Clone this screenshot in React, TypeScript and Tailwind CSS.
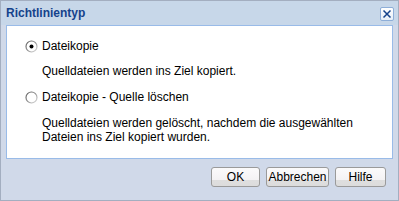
import React, { useState } from 'react';

type Option = {
  id: string;
  label: string;
  description: string[];
};

const options: Option[] = [
  {
    id: 'copy',
    label: 'Dateikopie',
    description: ['Quelldateien werden ins Ziel kopiert.'],
  },
  {
    id: 'move',
    label: 'Dateikopie - Quelle löschen',
    description: [
      'Quelldateien werden gelöscht, nachdem die ausgewählten',
      'Dateien ins Ziel kopiert wurden.',
    ],
  },
];

const Radio: React.FC<{ checked: boolean }> = ({ checked }) => (
  <svg width="13" height="13" viewBox="0 0 13 13" className="shrink-0">
    <defs>
      <linearGradient id="rim" x1="0" y1="0" x2="1" y2="1">
        <stop offset="0%" stopColor="#5a5a5a" />
        <stop offset="55%" stopColor="#9a9a9a" />
        <stop offset="100%" stopColor="#e2e2e2" />
      </linearGradient>
    </defs>
    <circle cx="6.5" cy="6.5" r="5.5" fill="#ffffff" stroke="url(#rim)" strokeWidth="1.2" />
    {checked && <circle cx="6.5" cy="6.5" r="2" fill="#000000" />}
  </svg>
);

const DialogButton: React.FC<{ label: string; width: string }> = ({ label, width }) => (
  <button
    className={`${width} h-[20px] rounded-[3px] border border-[#9a9a9a] bg-[linear-gradient(to_bottom,#fbfafb_0%,#f4f2f4_66%,#dedede_68%,#dcdcdc_100%)] text-[12px] leading-[18px] text-black`}
  >
    {label}
  </button>
);

export default function App() {
  const [selected, setSelected] = useState('copy');

  return (
    <div className="w-[399px] h-[201px] border border-[#a3aec0] bg-[#d0d9e9] flex flex-col font-['Liberation_Sans',Arial,sans-serif] text-black">
      {/* Title bar */}
      <div className="h-[24px] shrink-0 bg-[#c7d7e9] flex items-center justify-between pl-[5px] pr-[4px]">
        <span className="text-[12px] font-bold text-[#15428b] leading-none">Richtlinientyp</span>
        <button className="w-[14px] h-[14px] mt-[2px] rounded-[2px] border border-[#8eaed8] bg-[linear-gradient(to_bottom,#ffffff,#e6eef8)] flex items-center justify-center">
          <svg width="10" height="10" viewBox="0 0 10 10">
            <path d="M1.5 1.5 L8.5 8.5 M8.5 1.5 L1.5 8.5" stroke="#15428b" strokeWidth="1.5" />
          </svg>
        </button>
      </div>

      {/* Content panel */}
      <div className="mx-[5px] h-[134px] shrink-0 border border-[#99bbe8] bg-white pl-[18px] pt-[13px]">
        {options.map((opt, i) => (
          <div key={opt.id} className={i === 0 ? '' : 'mt-[12px]'}>
            <label className="flex items-center gap-[4px] h-[14px] cursor-default" onClick={() => setSelected(opt.id)}>
              <Radio checked={selected === opt.id} />
              <span className="text-[12px] leading-[14px]">{opt.label}</span>
            </label>
            <div className={`pl-[17px] ${i === 0 ? 'mt-[11px]' : 'mt-[12px]'} text-[12px] leading-[14px]`}>
              {opt.description.map((line) => (
                <div key={line}>{line}</div>
              ))}
            </div>
          </div>
        ))}
      </div>

      {/* Footer */}
      <div className="flex justify-end gap-[6px] pt-[8px] pr-[12px]">
        <DialogButton label="OK" width="w-[49px]" />
        <DialogButton label="Abbrechen" width="w-[63px]" />
        <DialogButton label="Hilfe" width="w-[51px]" />
      </div>
    </div>
  );
}
